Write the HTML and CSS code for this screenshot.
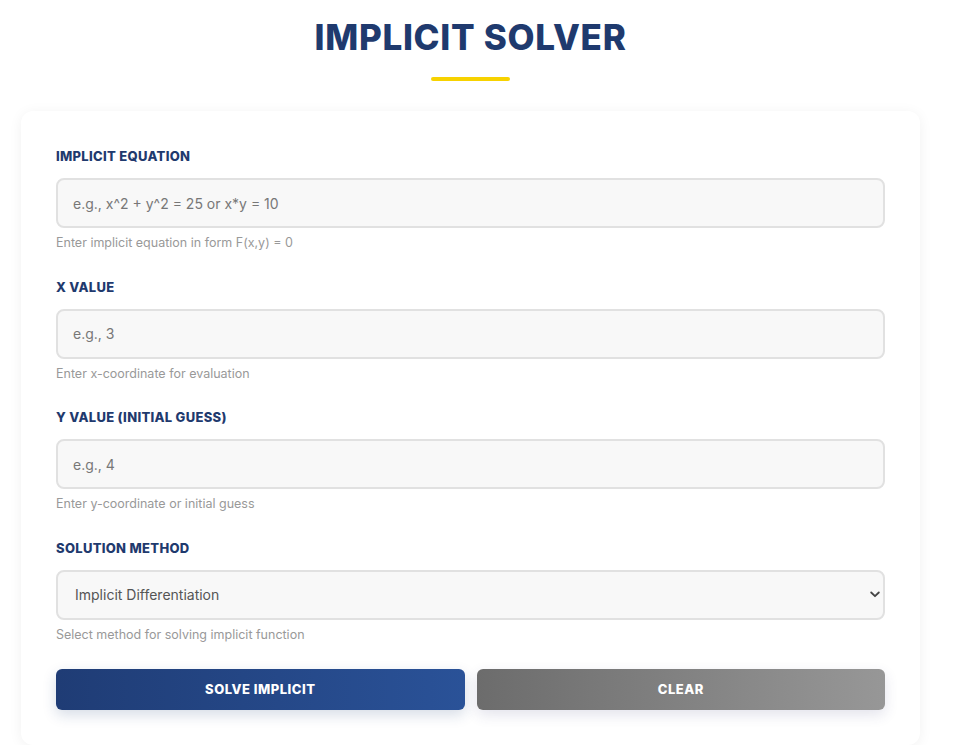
FILE: index.html
```html
<!DOCTYPE html>
<html lang="en">
<head>
<meta charset="utf-8">
<title>Implicit Solver</title>
<link rel="stylesheet" href="styles.css">
</head>
<body>
<div class="page">
  <header class="header">
    <h1 class="title">IMPLICIT SOLVER</h1>
    <div class="underline"></div>
  </header>
  <main class="card">
    <div class="group">
      <label class="label" for="eq">IMPLICIT EQUATION</label>
      <input class="field" id="eq" type="text" placeholder="e.g., x^2 + y^2 = 25 or x*y = 10">
      <div class="hint">Enter implicit equation in form F(x,y) = 0</div>
    </div>
    <div class="group">
      <label class="label" for="xv">X VALUE</label>
      <input class="field" id="xv" type="text" placeholder="e.g., 3">
      <div class="hint">Enter x-coordinate for evaluation</div>
    </div>
    <div class="group">
      <label class="label" for="yv">Y VALUE (INITIAL GUESS)</label>
      <input class="field" id="yv" type="text" placeholder="e.g., 4">
      <div class="hint">Enter y-coordinate or initial guess</div>
    </div>
    <div class="group">
      <label class="label" for="method">SOLUTION METHOD</label>
      <div class="select-wrap">
        <select class="field select" id="method">
          <option>Implicit Differentiation</option>
          <option>Newton's Method</option>
        </select>
        <svg class="chev" width="10" height="7" viewBox="0 0 10 7"><path d="M1.2 1.5 L5 5.2 L8.8 1.5" fill="none" stroke="#444" stroke-width="1.8" stroke-linecap="round" stroke-linejoin="round"/></svg>
      </div>
      <div class="hint">Select method for solving implicit function</div>
    </div>
    <div class="buttons">
      <button class="btn btn-primary" type="button">SOLVE IMPLICIT</button>
      <button class="btn btn-clear" type="button">CLEAR</button>
    </div>
  </main>
</div>
</body>
</html>
```
FILE: styles.css
```css
* { box-sizing: border-box; }
html, body { margin: 0; padding: 0; background: #ffffff; }
body {
  font-family: "Inter", "Open Sans", "Liberation Sans", sans-serif;
  color: #333;
}
.page {
  width: 899px;
  margin-left: 21px;
}
.header {
  display: flex;
  flex-direction: column;
  align-items: center;
  padding-top: 14px;
}
.title {
  margin: 0;
  font-size: 35px;
  line-height: 46px;
  font-weight: 800;
  color: #1f3a6e;
  letter-spacing: 0.7px;
}
.underline {
  width: 79px;
  height: 4px;
  background: #f7d200;
  border-radius: 2px;
  margin-top: 17px;
}
.card {
  margin-top: 30px;
  background: #fff;
  border-radius: 12px;
  box-shadow: 0 2px 14px rgba(0, 0, 0, 0.06);
  padding: 35px 35px 35px 35px;
}
.group { margin-bottom: 24.5px; }
.label {
  display: block;
  font-size: 13px;
  line-height: 20px;
  font-weight: 800;
  color: #1f3a6e;
  letter-spacing: 0.3px;
  margin-bottom: 12px;
}
.field {
  display: block;
  width: 100%;
  height: 50px;
  border: 2px solid #e1e1e1;
  border-radius: 8px;
  background: #f8f8f8;
  padding: 0 15px;
  font-family: inherit;
  font-size: 14px;
  color: #555;
  outline: none;
}
.field::placeholder { color: #777; }
.select-wrap { position: relative; }
.select {
  appearance: none;
  -webkit-appearance: none;
  padding-left: 17px;
  color: #555;
}
.chev {
  position: absolute;
  right: 5px;
  top: 21px;
}
.hint {
  margin-top: 6px;
  font-size: 12.5px;
  line-height: 18px;
  color: #999;
}
.buttons {
  display: flex;
  gap: 12px;
  margin-top: 25px;
}
.btn {
  flex: 1;
  height: 41px;
  border: none;
  border-radius: 6px;
  color: #fff;
  font-family: inherit;
  font-size: 13px;
  font-weight: 800;
  letter-spacing: 0.5px;
  cursor: pointer;
}
.btn-primary {
  background: linear-gradient(90deg, #1f3c75 0%, #2a5298 100%);
  box-shadow: 0 5px 14px rgba(30, 60, 114, 0.18);
}
.btn-clear {
  background: linear-gradient(90deg, #6c6c6c 0%, #979797 100%);
  box-shadow: 0 5px 14px rgba(60, 60, 120, 0.14);
}
```
